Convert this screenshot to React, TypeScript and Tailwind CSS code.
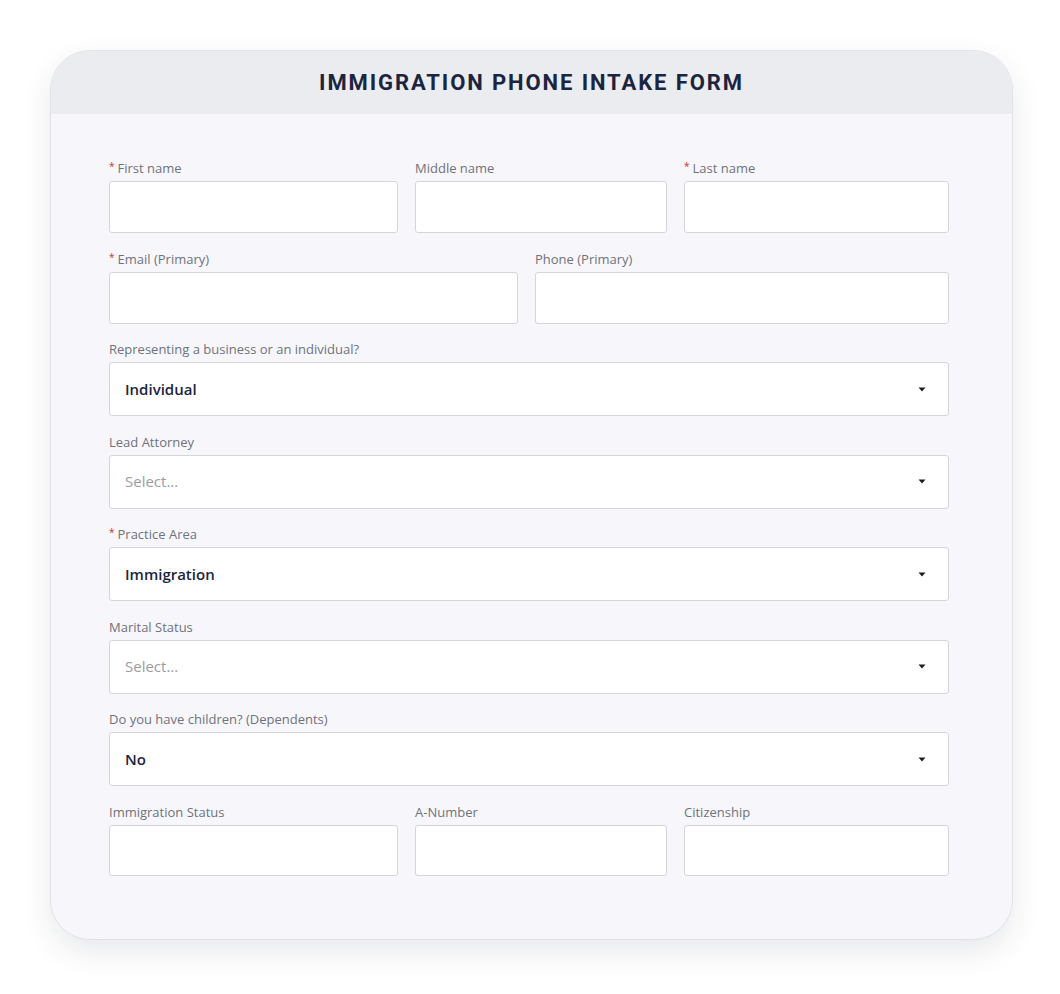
import React from 'react';

// Small filled triangle used on the select boxes
function Caret() {
  return (
    <svg width="8" height="5" viewBox="0 0 8 5" className="text-[#1a1d26]">
      <path d="M0.5 0.5 L7.5 0.5 L4 4.5 Z" fill="currentColor" />
    </svg>
  );
}

function Label({ text, required }: { text: string; required?: boolean }) {
  return (
    <div className="h-[16px] mb-[5px] flex items-start text-[13px] leading-[16px] text-[#6f727b]">
      {required && <span className="text-[#d22d2d] text-[10px] leading-[12px] mr-[3px]">*</span>}
      <span>{text}</span>
    </div>
  );
}

function TextField({ label, required, short }: { label: string; required?: boolean; short?: boolean }) {
  return (
    <div>
      <Label text={label} required={required} />
      <div
        className={`${short ? 'h-[51px]' : 'h-[52px]'} bg-white border border-[#d3d5db] rounded-[3px]`}
      />
    </div>
  );
}

function SelectField({
  label,
  value,
  required,
}: {
  label: string;
  value?: string;
  required?: boolean;
}) {
  return (
    <div>
      <Label text={label} required={required} />
      <div className="h-[54px] bg-white border border-[#d3d5db] rounded-[3px] flex items-center justify-between pl-[15px] pr-[22px]">
        {value ? (
          <span className="text-[15px] font-semibold text-[#1c2440]">{value}</span>
        ) : (
          <span className="text-[15px] text-[#9a9ca4]">Select...</span>
        )}
        <Caret />
      </div>
    </div>
  );
}

export default function App() {
  return (
    <div
      className="min-h-screen bg-white pt-[50px] pl-[50px]"
      style={{ fontFamily: '"Open Sans", "Noto Sans", sans-serif' }}
    >
      <div className="w-[963px] h-[890px] rounded-[40px] bg-[#f7f7fb] border border-[#e2e3e8] shadow-[0_12px_30px_rgba(30,35,60,0.10)] overflow-hidden">
        <div className="h-[63px] bg-[#ebecf0] flex items-center justify-center">
          <h1
            className="text-[22px] font-bold tracking-[1.9px] text-[#1c2540]"
            style={{ fontFamily: 'Roboto, "Liberation Sans", sans-serif' }}
          >
            IMMIGRATION PHONE INTAKE FORM
          </h1>
        </div>

        <div className="pt-[46px] pl-[58px] pr-[63px] flex flex-col gap-[17.5px]">
          <div className="grid grid-cols-[289px_252px_265px] gap-x-[17px]">
            <TextField label="First name" required />
            <TextField label="Middle name" />
            <TextField label="Last name" required />
          </div>

          <div className="grid grid-cols-[409px_414px] gap-x-[17px]">
            <TextField label="Email (Primary)" required />
            <TextField label="Phone (Primary)" />
          </div>

          <SelectField label="Representing a business or an individual?" value="Individual" />
          <SelectField label="Lead Attorney" />
          <SelectField label="Practice Area" value="Immigration" required />
          <SelectField label="Marital Status" />
          <SelectField label="Do you have children? (Dependents)" value="No" />

          <div className="grid grid-cols-[289px_252px_265px] gap-x-[17px]">
            <TextField label="Immigration Status" short />
            <TextField label="A-Number" short />
            <TextField label="Citizenship" short />
          </div>
        </div>
      </div>
    </div>
  );
}
